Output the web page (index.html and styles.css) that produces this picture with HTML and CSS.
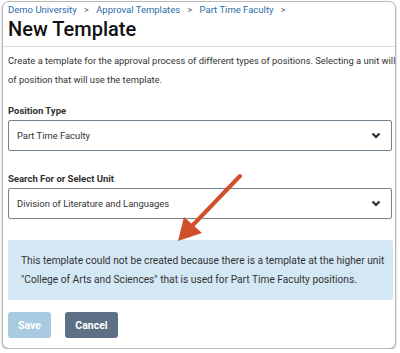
FILE: index.html
```html
<!DOCTYPE html>
<html lang="en">
<head>
    <meta charset="UTF-8">
    <meta name="viewport" content="width=device-width, initial-scale=1.0">
    <title>New Template</title>
    <link rel="stylesheet" href="styles.css">
</head>
<body>

<div class="frame">
    <!-- Breadcrumb -->
    <nav class="crumbs">
        <a href="#">Demo University</a>
        <span class="sep">&gt;</span>
        <a href="#">Approval Templates</a>
        <span class="sep">&gt;</span>
        <a href="#">Part Time Faculty</a>
        <span class="sep">&gt;</span>
    </nav>
    <h1>New Template</h1>

    <div class="content">
        <p class="intro">
            <span>Create a template for the approval process of different types of positions. Selecting a unit will limit the template to that unit and its sub-units for the type</span>
            <span>of position that will use the template.</span>
        </p>

        <label class="field-label first">Position Type</label>
        <div class="select">
            <span>Part Time Faculty</span>
            <svg class="chev" width="10" height="7" viewBox="0 0 10 7"><path d="M1.5 1.5 L5 5 L8.5 1.5" fill="none" stroke="#2b2f33" stroke-width="2.2"/></svg>
        </div>

        <label class="field-label">Search For or Select Unit</label>
        <div class="select">
            <span>Division of Literature and Languages</span>
            <svg class="chev" width="10" height="7" viewBox="0 0 10 7"><path d="M1.5 1.5 L5 5 L8.5 1.5" fill="none" stroke="#2b2f33" stroke-width="2.2"/></svg>
        </div>

        <div class="alert">
            <span>This template could not be created because there is a template at the higher unit</span>
            <span>"College of Arts and Sciences" that is used for Part Time Faculty positions.</span>
        </div>

        <div class="actions">
            <button class="btn save">Save</button>
            <button class="btn cancel">Cancel</button>
        </div>
    </div>

    <!-- annotation arrow -->
    <svg class="arrow" width="80" height="80" viewBox="0 0 80 80">
        <line x1="70" y1="5" x2="22" y2="55" stroke="#d0502a" stroke-width="4" stroke-linecap="round"/>
        <polygon points="8,70 14,46 32,62" fill="#d0502a"/>
    </svg>
</div>

</body>
</html>
```

FILE: styles.css
```css
body {
    margin: 0;
    padding: 0;
    background-color: #ffffff;
    font-family: Roboto, "Liberation Sans", sans-serif;
    color: #333;
}
.frame {
    position: relative;
    width: 392px;
    height: 346px;
    margin: 1px 0 0 2px;
    background-color: white;
    border: 1px solid #b9b9b9;
    border-radius: 7px;
    box-shadow: 0 1px 2px rgba(0, 0, 0, 0.35);
    overflow: hidden;
}
.crumbs {
    padding: 2px 0 0 5px;
    font-size: 9.5px;
    line-height: 12px;
}
.crumbs a {
    color: #2c6da6;
    text-decoration: none;
}
.crumbs .sep {
    color: #666;
    margin: 0 5px;
    font-size: 9px;
}
h1 {
    margin: 0;
    padding: 1px 0 5px 5px;
    font-size: 20px;
    font-weight: 500;
    line-height: 24px;
    color: #111;
    border-bottom: 1px solid #dcdcdc;
}
.content {
    padding: 0 0 0 5px;
}
.intro {
    margin: 4px 0 0;
    font-size: 9.4px;
    line-height: 19px;
}
.intro span {
    display: block;
    white-space: nowrap;
}
.field-label {
    display: block;
    margin: 21px 0 2px;
    font-size: 9.5px;
    font-weight: bold;
    line-height: 14px;
}
.field-label.first {
    margin-top: 15px;
}
.select {
    width: 384px;
    height: 31px;
    box-sizing: border-box;
    border: 1px solid #72828f;
    border-radius: 2px;
    display: flex;
    align-items: center;
    justify-content: space-between;
    padding: 0 10px 0 8px;
    font-size: 9.4px;
}
.alert {
    width: 385px;
    margin-top: 21px;
    padding: 11px 13px;
    box-sizing: border-box;
    background-color: #d3e7f4;
    border-radius: 2px;
    font-size: 10.2px;
    line-height: 19px;
}
.alert span {
    display: block;
    white-space: nowrap;
}
.actions {
    display: flex;
    gap: 14px;
    margin-top: 12px;
}
.btn {
    height: 26px;
    border: none;
    border-radius: 3px;
    color: white;
    font-family: Roboto, "Liberation Sans", sans-serif;
    font-size: 10.5px;
    font-weight: bold;
    padding: 0;
}
.save {
    width: 43px;
    background-color: #a8cbe1;
}
.cancel {
    width: 53px;
    background-color: #5d7086;
}
.arrow {
    position: absolute;
    left: 167px;
    top: 169px;
}
```
